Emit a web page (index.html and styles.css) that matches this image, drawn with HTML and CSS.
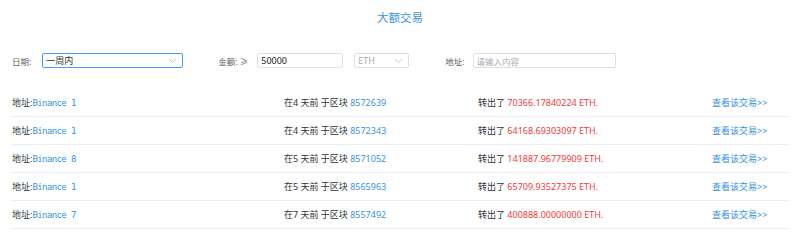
FILE: index.html
```html
<!DOCTYPE html>
<html lang="zh-CN">
<head>
    <meta charset="UTF-8">
    <meta name="viewport" content="width=device-width, initial-scale=1.0">
    <title>大额交易</title>
    <link rel="stylesheet" href="styles.css">
</head>
<body>

    <h1 class="title">大额交易</h1>

    <!-- Filter bar -->
    <div class="filters">
        <span class="flabel">日期:</span>
        <div class="select select-date is-focus">
            <span>一周内</span>
            <svg class="arrow" width="9" height="6" viewBox="0 0 9 6"><path d="M1 1l3.5 3.5L8 1" fill="none" stroke="#c0c4cc" stroke-width="0.9"/></svg>
        </div>

        <span class="flabel lbl-amount">金额: ≥</span>
        <div class="input input-amount">50000</div>
        <div class="select select-coin">
            <span class="muted">ETH</span>
            <svg class="arrow" width="9" height="6" viewBox="0 0 9 6"><path d="M1 1l3.5 3.5L8 1" fill="none" stroke="#c0c4cc" stroke-width="0.9"/></svg>
        </div>

        <span class="flabel lbl-addr">地址:</span>
        <div class="input input-addr placeholder">请输入内容</div>
    </div>

    <!-- Transactions -->
    <ul class="tx-list">
        <li class="tx-row">
            <div class="cell">地址:<a class="addr">Binance 1</a></div>
            <div class="cell">在4 天前 于区块 <a class="link">8572639</a></div>
            <div class="cell">转出了 <span class="amount">70366.17840224 ETH.</span></div>
            <div class="cell"><a class="link">查看该交易&gt;&gt;</a></div>
        </li>
        <li class="tx-row">
            <div class="cell">地址:<a class="addr">Binance 1</a></div>
            <div class="cell">在4 天前 于区块 <a class="link">8572343</a></div>
            <div class="cell">转出了 <span class="amount">64168.69303097 ETH.</span></div>
            <div class="cell"><a class="link">查看该交易&gt;&gt;</a></div>
        </li>
        <li class="tx-row">
            <div class="cell">地址:<a class="addr">Binance 8</a></div>
            <div class="cell">在5 天前 于区块 <a class="link">8571052</a></div>
            <div class="cell">转出了 <span class="amount">141887.96779909 ETH.</span></div>
            <div class="cell"><a class="link">查看该交易&gt;&gt;</a></div>
        </li>
        <li class="tx-row">
            <div class="cell">地址:<a class="addr">Binance 1</a></div>
            <div class="cell">在5 天前 于区块 <a class="link">8565963</a></div>
            <div class="cell">转出了 <span class="amount">65709.93527375 ETH.</span></div>
            <div class="cell"><a class="link">查看该交易&gt;&gt;</a></div>
        </li>
        <li class="tx-row">
            <div class="cell">地址:<a class="addr">Binance 7</a></div>
            <div class="cell">在7 天前 于区块 <a class="link">8557492</a></div>
            <div class="cell">转出了 <span class="amount">400888.00000000 ETH.</span></div>
            <div class="cell"><a class="link">查看该交易&gt;&gt;</a></div>
        </li>
    </ul>

</body>
</html>
```

FILE: styles.css
```css
/* General */
body {
    margin: 0;
    font-family: "Noto Sans", "Noto Sans CJK SC", sans-serif;
    font-size: 9px;
    color: #303133;
    background: #fff;
}

/* Title */
.title {
    margin: 0;
    padding-top: 10px;
    height: 16px;
    line-height: 16px;
    text-align: center;
    font-size: 11.5px;
    font-weight: normal;
    color: #3a93dc;
}

/* Filter bar */
.filters {
    display: flex;
    align-items: center;
    margin-top: 27px;
    padding-left: 12px;
    height: 15px;
}

.flabel {
    color: #606266;
    font-size: 8.5px;
    margin-right: 11px;
}
.lbl-amount { margin-left: 35px; margin-right: 9px; }
.lbl-addr { margin-left: 36px; margin-right: 8px; }

.select,
.input {
    box-sizing: border-box;
    height: 15px;
    border: 1px solid #dcdfe6;
    border-radius: 2px;
    display: flex;
    align-items: center;
    padding: 0 3px;
    font-size: 9px;
}
.select {
    justify-content: space-between;
    padding-right: 5px;
}
.select.is-focus { border-color: #409eff; }

.select-date { width: 141px; }
.select-coin { width: 55px; margin-left: 11px; }
.input-amount { width: 86px; color: #222; }
.input-addr { width: 143px; }

.muted,
.placeholder { color: #a8abb2; }
.placeholder { font-size: 8.5px; }

/* Transactions list */
.tx-list {
    list-style: none;
    margin: 21px 11px 0 12px;
    padding: 0;
}

.tx-row {
    display: grid;
    grid-template-columns: 272px 194px 234px 1fr;
    align-items: center;
    height: 27px;
    border-bottom: 1px solid #ebeef5;
}

.cell { white-space: nowrap; }

.addr {
    font-family: "DejaVu Sans Mono", monospace;
    font-size: 9px;
    letter-spacing: -0.6px;
    color: #3a93dc;
}

.link { color: #3a93dc; }
.amount { color: #f03a3a; }
```
